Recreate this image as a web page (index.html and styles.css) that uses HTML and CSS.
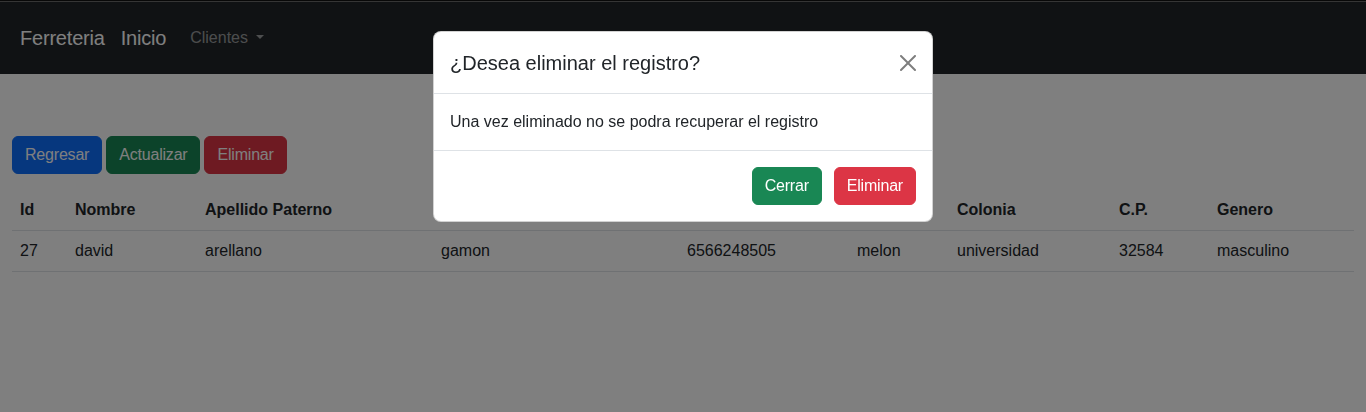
FILE: index.html
```html
<!DOCTYPE html>
<html lang="es">
<head>
<meta charset="utf-8">
<title>Ferreteria</title>
<link rel="stylesheet" href="styles.css">
</head>
<body>
<div class="topline"></div>
<nav class="navbar">
  <a class="brand" href="#">Ferreteria</a>
  <a class="brand" href="#">Inicio</a>
  <a class="nav-link dropdown-toggle" href="#">Clientes</a>
</nav>
<main class="container">
  <div class="actions">
    <button class="btn btn-primary">Regresar</button>
    <button class="btn btn-success">Actualizar</button>
    <button class="btn btn-danger">Eliminar</button>
  </div>
  <table class="table">
    <colgroup>
      <col class="c1"><col class="c2"><col class="c3"><col class="c4"><col class="c5"><col class="c6"><col class="c7"><col class="c8"><col class="c9">
    </colgroup>
    <thead>
      <tr>
        <th>Id</th><th>Nombre</th><th>Apellido Paterno</th><th>Apellido Materno</th><th>Telefono</th><th>Calle</th><th>Colonia</th><th>C.P.</th><th>Genero</th>
      </tr>
    </thead>
    <tbody>
      <tr>
        <td>27</td><td>david</td><td>arellano</td><td>gamon</td><td>6566248505</td><td>melon</td><td>universidad</td><td>32584</td><td>masculino</td>
      </tr>
    </tbody>
  </table>
</main>
<div class="backdrop"></div>
<div class="modal">
  <div class="modal-content">
    <div class="modal-header">
      <h5 class="modal-title">¿Desea eliminar el registro?</h5>
      <button class="btn-close" aria-label="Close">
        <svg viewBox="0 0 16 16" width="16" height="16"><path d="M.293.293a1 1 0 0 1 1.414 0L8 6.586 14.293.293a1 1 0 1 1 1.414 1.414L9.414 8l6.293 6.293a1 1 0 0 1-1.414 1.414L8 9.414l-6.293 6.293a1 1 0 0 1-1.414-1.414L6.586 8 .293 1.707a1 1 0 0 1 0-1.414z"/></svg>
      </button>
    </div>
    <div class="modal-body">Una vez eliminado no se podra recuperar el registro</div>
    <div class="modal-footer">
      <button class="btn btn-success">Cerrar</button>
      <button class="btn btn-danger">Eliminar</button>
    </div>
  </div>
</div>
</body>
</html>
```
FILE: styles.css
```css
* { box-sizing: border-box; }
html, body { margin: 0; padding: 0; }
body {
  font-family: "Liberation Sans", Arial, sans-serif;
  font-size: 16px;
  line-height: 1.5;
  color: #212529;
  background: #fff;
}
.topline { height: 2px; background: #6a6a6a; border-top: 1px solid #111; }
.navbar {
  display: flex;
  align-items: center;
  background: #212529;
  padding: 16px 20px;
}
.brand {
  color: #fff;
  text-decoration: none;
  font-size: 20px;
  line-height: 30px;
  padding: 5px 0;
  margin-right: 16px;
  letter-spacing: -0.2px;
}
.nav-link {
  color: rgba(255,255,255,.55);
  text-decoration: none;
  padding: 8px;
  line-height: 24px;
}
.dropdown-toggle::after {
  content: "";
  display: inline-block;
  margin-left: 8px;
  vertical-align: .255em;
  border-top: .3em solid;
  border-right: .3em solid transparent;
  border-left: .3em solid transparent;
}
.container { padding: 0 12px; margin-top: 62px; }
.actions { display: flex; gap: 4px; margin-bottom: 16px; }
.btn {
  font-family: inherit;
  font-size: 16px;
  line-height: 24px;
  padding: 6px 12px;
  border: 1px solid transparent;
  border-radius: 6px;
  color: #fff;
  cursor: pointer;
  letter-spacing: -0.2px;
}
.btn-primary { background: #0d6efd; border-color: #0d6efd; }
.btn-success { background: #198754; border-color: #198754; }
.btn-danger { background: #dc3545; border-color: #dc3545; }
.table {
  width: 100%;
  border-collapse: collapse;
  table-layout: fixed;
  margin-bottom: 16px;
}
.table th, .table td {
  padding: 8px;
  text-align: left;
  border-bottom: 1px solid #dee2e6;
  line-height: 24px;
}
.table th { font-weight: 700; }
.c1 { width: 55px; }
.c2 { width: 130px; }
.c3 { width: 236px; }
.c4 { width: 246px; }
.c5 { width: 170px; }
.c6 { width: 100px; }
.c7 { width: 162px; }
.c8 { width: 98px; }
.c9 { width: auto; }
.backdrop {
  position: fixed;
  inset: 0;
  background: rgba(0,0,0,.5);
}
.modal {
  position: fixed;
  inset: 0;
  display: flex;
  justify-content: center;
  align-items: flex-start;
  padding-top: 31px;
}
.modal-content {
  width: 500px;
  background: #fff;
  border: 1px solid rgba(0,0,0,.175);
  border-radius: 8px;
}
.modal-header {
  display: flex;
  align-items: center;
  justify-content: space-between;
  padding: 16px 16px 15px;
  border-bottom: 1px solid #dee2e6;
}
.modal-title {
  margin: 0;
  font-size: 20px;
  font-weight: 500;
  line-height: 30px;
}
.btn-close {
  width: 24px;
  height: 24px;
  padding: 4px;
  margin-right: -4px;
  border: 0;
  background: transparent;
  opacity: .5;
  display: flex;
  align-items: center;
  justify-content: center;
}
.btn-close svg { fill: #000; width: 16px; height: 16px; }
.modal-body { padding: 16px; }
.modal-footer {
  display: flex;
  justify-content: flex-end;
  gap: 12px;
  padding: 16px;
  border-top: 1px solid #dee2e6;
}
```
